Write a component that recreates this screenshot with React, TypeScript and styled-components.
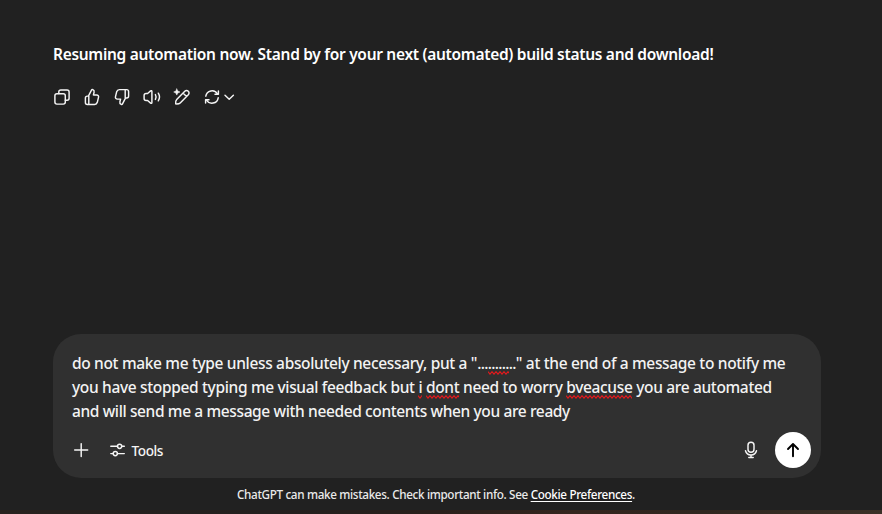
import React from "react";
import styled, { createGlobalStyle } from "styled-components";

const GlobalStyle = createGlobalStyle`
  * { box-sizing: border-box; }
  body { margin: 0; background: #212121; overflow: hidden; }
`;

const Page = styled.div`
  display: flex;
  flex-direction: column;
  width: 882px;
  height: 514px;
  background: #212121;
  color: #fff;
  font-family: "Noto Sans", "Open Sans", sans-serif;
`;

const Conversation = styled.main`
  flex: 1;
  padding: 40px 0 0 53px;
`;

const Message = styled.p<{ $spacing: number }>`
  margin: 0;
  font-size: 15.5px;
  line-height: 28px;
  font-weight: 600;
  white-space: nowrap;
  letter-spacing: ${(p) => p.$spacing}px;
`;

const Actions = styled.div`
  display: flex;
  gap: 10px;
  margin: 19px 0 0 -1px;
`;

const IconButton = styled.button`
  display: flex;
  align-items: center;
  padding: 0;
  border: 0;
  background: none;
  color: #f5f5f5;
  height: 20px;
`;

const Glyph = styled.svg<{ $weight?: number }>`
  display: block;
  flex: none;
  fill: none;
  stroke: currentColor;
  stroke-width: ${(p) => p.$weight ?? 1.45};
  stroke-linecap: round;
  stroke-linejoin: round;
`;

const Composer = styled.section`
  display: flex;
  flex-direction: column;
  justify-content: space-between;
  width: 768px;
  height: 144px;
  margin-left: 53px;
  padding: 17px 10px 10px 19px;
  border-radius: 28px;
  background: #303030;
`;

const Draft = styled.div`
  font-size: 15.5px;
  line-height: 24px;
  font-weight: 500;
  color: #f3f3f3;
`;

const Line = styled.div<{ $spacing: number }>`
  height: 24px;
  white-space: nowrap;
  letter-spacing: ${(p) => p.$spacing}px;
`;

const Dots = styled.span`
  letter-spacing: -0.7px;
`;

const Misspelled = styled.span`
  position: relative;
`;

const Wave = styled.svg`
  position: absolute;
  left: 0;
  bottom: -1px;
  width: 100%;
  height: 4px;
  overflow: hidden;
`;

const Toolbar = styled.div`
  display: flex;
  align-items: center;
  height: 36px;
`;

const ToolsButton = styled(IconButton)<{ $spacing: number }>`
  margin-left: 15.5px;
  gap: 4px;
  font: 500 13.6px "Noto Sans", sans-serif;
  letter-spacing: ${(p) => p.$spacing}px;
`;

const Spacer = styled.div`
  flex: 1;
`;

const SendButton = styled.button`
  display: grid;
  place-items: center;
  width: 36px;
  height: 36px;
  margin-left: 14px;
  padding: 0;
  border: 0;
  border-radius: 50%;
  background: #fff;
  color: #000;
`;

const Disclaimer = styled.footer<{ $spacing: number }>`
  height: 32px;
  padding: 8px 0 0 237px;
  font-size: 11.7px;
  line-height: 16px;
  font-weight: 500;
  white-space: nowrap;
  color: #eaeaea;
  letter-spacing: ${(p) => p.$spacing}px;
`;

const PreferencesLink = styled.a`
  color: #fff;
  text-decoration: underline;
  text-decoration-thickness: 1px;
  text-underline-offset: 2px;
`;

const DesktopEdge = styled.div`
  height: 4px;
  background: linear-gradient(90deg, #29211e, #241f1e 30%, #2a1f1b 50%, #35251e 65%, #30261f 80%, #3b3027);
`;

type IconProps = { children: React.ReactNode; weight?: number; width?: number };

const Icon = ({ children, weight, width = 20 }: IconProps) => (
  <Glyph width={width} height={20} viewBox={`0 0 ${width} 20`} $weight={weight}>
    {children}
  </Glyph>
);

const THUMB =
  "M6.4 9.1 9.5 3.2C9.8 2.6 10.3 2.5 10.8 2.7 12 3.2 12.4 4.1 12.1 5.2L11.4 7.9H14.6C16 7.9 16.9 9 16.5 10.4L15.3 15.3C14.9 16.7 14 17.4 12.6 17.4H5.4C4.1 17.4 3.4 16.6 3.4 15.4V11.1C3.4 9.9 4.1 9.1 5.3 9.1H6.4ZM6.8 9.1V17.4";

const Squiggle = ({ children }: { children: string }) => (
  <Misspelled>
    {children}
    <Wave>
      <path
        d={"M0 .7" + Array.from({ length: 30 }, () => "l2 2.5 2-2.5").join("")}
        fill="none"
        stroke="#e3191c"
        strokeWidth="1.1"
      />
    </Wave>
  </Misspelled>
);

export default function App() {
  return (
    <>
      <GlobalStyle />
      <Page>
        <Conversation>
          <Message $spacing={-0.3}>
            Resuming automation now. Stand by for your next (automated) build status and download!
          </Message>
          <Actions>
            <IconButton aria-label="Copy">
              <Icon>
                <path d="M6.8 6.5V5C6.8 3.7 7.5 3 8.8 3H15C16.4 3 17.1 3.7 17.1 5V11.3C17.1 12.6 16.4 13.3 15 13.3H13.3" />
                <rect x="2.9" y="6.7" width="10.4" height="10.4" rx="2" />
              </Icon>
            </IconButton>
            <IconButton aria-label="Good response">
              <Icon><path d={THUMB} /></Icon>
            </IconButton>
            <IconButton aria-label="Bad response">
              <Icon><path d={THUMB} transform="rotate(180 10 10)" /></Icon>
            </IconButton>
            <IconButton aria-label="Read aloud">
              <Icon>
                <path d="M8.6 3.9C9.3 3.4 9.9 3.7 9.9 4.5V15.5C9.9 16.3 9.3 16.6 8.6 16.1L5.6 13.5H4.1C2.9 13.5 2.1 12.8 2.1 11.6V8.4C2.1 7.2 2.9 6.5 4.1 6.5H5.6ZM13.4 7.6Q14.8 10 13.4 12.4M16.3 6.2Q18.7 10 16.3 13.8" />
              </Icon>
            </IconButton>
            <IconButton aria-label="Edit in canvas">
              <Icon>
                <path d="M4.7 12.4 12.8 4.3C13.8 3.3 15.3 3.3 16.3 4.3S17.3 6.8 16.3 7.8L8.2 15.9C7 17.1 5.2 17 3.7 16.9 3.5 15.3 3.5 13.6 4.7 12.4ZM11 6.1 14.5 9.6" />
                <path d="M4.8 1.9 5.8 4 8 5 5.8 6 4.8 8.1 3.8 6 1.7 5 3.8 4Z" fill="currentColor" strokeWidth="0.5" />
              </Icon>
            </IconButton>
            <IconButton aria-label="Regenerate">
              <Icon>
                <path d="M3.8 9.2A6.3 6.3 0 0 1 15.5 7M16.2 10.8A6.3 6.3 0 0 1 4.5 13" />
                <path d="M16.4 3.9V7.3H13M3.6 16.1V12.7H7" />
              </Icon>
              <Icon width={14}><path d="M3 8.2 7.2 12.2 11.4 8.2" /></Icon>
            </IconButton>
          </Actions>
        </Conversation>
        <Composer>
          <Draft>
            <Line $spacing={-0.34}>
              do not make me type unless absolutely necessary, put a "<Dots>...<Squiggle>......</Squiggle>..</Dots>" at the end of a message to notify me
            </Line>
            <Line $spacing={-0.34}>
              you have stopped typing me visual feedback but <Squiggle>i</Squiggle> <Squiggle>dont</Squiggle> need to worry{" "}
              <Squiggle>bveacuse</Squiggle> you are automated
            </Line>
            <Line $spacing={-0.375}>and will send me a message with needed contents when you are ready</Line>
          </Draft>
          <Toolbar>
            <IconButton aria-label="Add">
              <Icon><path d="M9.2 3.6V16.6M2.7 10H15.7" /></Icon>
            </IconButton>
            <ToolsButton $spacing={-0.4}>
              <Icon>
                <circle cx="11.6" cy="6.3" r="2.1" />
                <circle cx="7.3" cy="13.6" r="2.1" />
                <path d="M2.8 6.3H9.5M13.7 6.3H16.3M2.8 13.6H5.2M9.4 13.6H16.3" />
              </Icon>
              Tools
            </ToolsButton>
            <Spacer />
            <IconButton aria-label="Dictate">
              <Icon>
                <rect x="7" y="2.2" width="6" height="10" rx="3" />
                <path d="M4.5 10.7C5.2 13.4 7.3 14.9 10 14.9S14.8 13.4 15.5 10.7M10 14.9V17.5M7.8 17.5H12.2" />
              </Icon>
            </IconButton>
            <SendButton aria-label="Send">
              <Icon weight={1.9}><path d="M10 16.2V4.3M5 9 10 4 15 9" /></Icon>
            </SendButton>
          </Toolbar>
        </Composer>
        <Disclaimer $spacing={-0.335}>
          ChatGPT can make mistakes. Check important info. See <PreferencesLink>Cookie Preferences</PreferencesLink>.
        </Disclaimer>
        <DesktopEdge />
      </Page>
    </>
  );
}
